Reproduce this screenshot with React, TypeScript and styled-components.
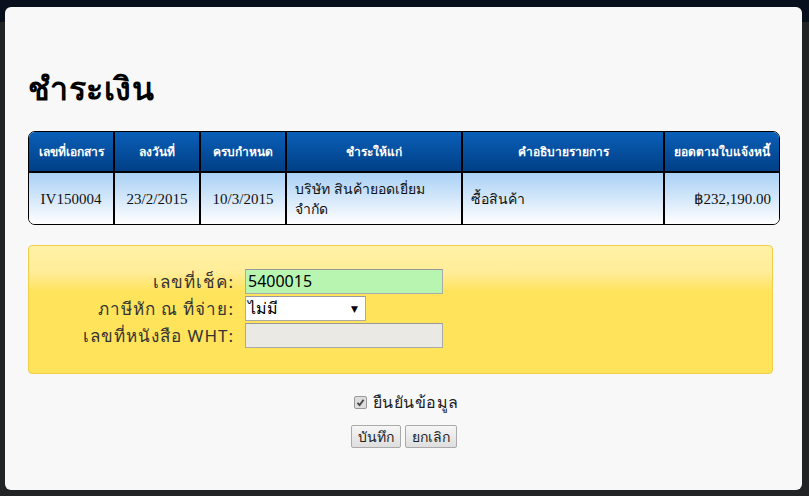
import React from "react";
import styled, { createGlobalStyle } from "styled-components";

const Global = createGlobalStyle`
  html, body { margin: 0; padding: 0; }
  body {
    width: 809px; height: 496px; overflow: hidden;
    background: #1e1f21;
    font-family: "Noto Sans", "DejaVu Sans", sans-serif;
  }
`;

const Backdrop = styled.div`
  width: 809px;
  height: 496px;
  box-sizing: border-box;
  padding: 7px 7px 6px 5px;
  background: linear-gradient(#07101c 0, #07101c 22px, #222324 22px, #222324 100%);
`;

const Modal = styled.div`
  width: 797px;
  height: 483px;
  box-sizing: border-box;
  background: #f8f8f8;
  border-radius: 6px;
  padding: 0 22px 0 23px;
  display: flex;
  flex-direction: column;
`;

const Title = styled.h1`
  margin: 58px 0 0 0;
  height: 66px;
  font-size: 32px;
  font-weight: bold;
  color: #000;
  line-height: 46px;
  letter-spacing: 0.5px;
`;

const TableWrap = styled.div`
  width: 752px;
  border: 1px solid #000;
  border-radius: 7px;
  overflow: hidden;
  box-sizing: border-box;
`;

const Table = styled.table`
  width: 750px;
  border-collapse: collapse;
  table-layout: fixed;
`;

const Th = styled.th`
  height: 39px;
  padding: 0 2px;
  background: linear-gradient(#0a5fb8, #003f86);
  color: #fff;
  font-size: 12px;
  font-weight: bold;
  text-align: center;
  white-space: nowrap;
  border-left: 2px solid #000;
  border-bottom: 2px solid #000;
  &:first-child { border-left: none; }
`;

const Td = styled.td<{ $align?: string; $thai?: boolean }>`
  height: 51px;
  padding: 0 8px;
  background: linear-gradient(#a9d0f5, #ffffff);
  color: #111;
  font-family: ${(p) => (p.$thai ? `"Noto Sans", sans-serif` : `"Liberation Serif", serif`)};
  font-size: ${(p) => (p.$thai ? "14px" : "15px")};
  line-height: 20px;
  text-align: ${(p) => p.$align || "center"};
  border-left: 2px solid #000;
  &:first-child { border-left: none; }
`;

const Panel = styled.div`
  margin-top: 20px;
  width: 745px;
  height: 129px;
  box-sizing: border-box;
  border: 1px solid #f1cf4a;
  border-radius: 4px;
  background: linear-gradient(#fff1a6 0px, #ffed99 26px, #ffe35b 46px, #ffe35b 100%);
  padding: 23px 0 0 0;
  display: grid;
  grid-template-columns: 205px auto;
  column-gap: 11px;
  row-gap: 2px;
  align-content: start;
`;

const Label = styled.label`
  text-align: right;
  font-size: 17px;
  letter-spacing: 1px;
  color: #333;
  line-height: 25px;
  height: 25px;
`;

const Field = styled.div<{ $bg: string; $w: number }>`
  width: ${(p) => p.$w}px;
  height: 25px;
  box-sizing: border-box;
  background: ${(p) => p.$bg};
  border: 1px solid #aaa;
  border-top-color: #999;
  font-size: 16px;
  color: #000;
  line-height: 23px;
  padding: 0 2px;
  display: flex;
  align-items: center;
  justify-content: space-between;
`;

const Arrow = styled.span`
  font-size: 9px;
  color: #000;
  margin-right: 5px;
`;

const Confirm = styled.div`
  margin-top: 18px;
  display: flex;
  justify-content: center;
  align-items: center;
  gap: 6px;
  font-size: 16px;
  letter-spacing: 0.5px;
  color: #222;
  height: 20px;
  padding-left: 4px;
`;

const Check = styled.span`
  width: 11px;
  height: 11px;
  border: 1px solid #999;
  border-radius: 2px;
  background: #ddd;
  display: flex;
  align-items: center;
  justify-content: center;
`;

const Buttons = styled.div`
  margin-top: 13px;
  display: flex;
  justify-content: center;
  gap: 4px;
`;

const Button = styled.button`
  height: 23px;
  padding: 0 6px;
  font-family: "Noto Sans", sans-serif;
  font-size: 14px;
  color: #222;
  background: linear-gradient(#f6f6f6, #dedede);
  border: 1px solid #aaa;
  border-radius: 2px;
  line-height: 19px;
`;

const widths = [85, 86, 86, 176, 202, 115];

export default function App() {
  return (
    <>
      <Global />
      <Backdrop>
        <Modal>
          <Title>ชำระเงิน</Title>
          <TableWrap>
            <Table>
              <colgroup>
                {widths.map((w, i) => (
                  <col key={i} style={{ width: w }} />
                ))}
              </colgroup>
              <thead>
                <tr>
                  <Th>เลขที่เอกสาร</Th>
                  <Th>ลงวันที่</Th>
                  <Th>ครบกำหนด</Th>
                  <Th>ชำระให้แก่</Th>
                  <Th>คำอธิบายรายการ</Th>
                  <Th>ยอดตามใบแจ้งหนี้</Th>
                </tr>
              </thead>
              <tbody>
                <tr>
                  <Td>IV150004</Td>
                  <Td>23/2/2015</Td>
                  <Td>10/3/2015</Td>
                  <Td $thai $align="left">บริษัท สินค้ายอดเยี่ยม จำกัด</Td>
                  <Td $thai $align="left">ซื้อสินค้า</Td>
                  <Td $align="right">฿232,190.00</Td>
                </tr>
              </tbody>
            </Table>
          </TableWrap>
          <Panel>
            <Label>เลขที่เช็ค:</Label>
            <Field $bg="#b8f5b0" $w={198}>5400015</Field>
            <Label>ภาษีหัก ณ ที่จ่าย:</Label>
            <Field $bg="#ffffff" $w={121}>
              ไม่มี<Arrow>▼</Arrow>
            </Field>
            <Label>เลขที่หนังสือ WHT:</Label>
            <Field $bg="#ebe9e3" $w={198} />
          </Panel>
          <Confirm>
            <Check>
              <svg width="9" height="9" viewBox="0 0 9 9">
                <path d="M1.5 4.8 L3.6 7 L7.6 1.8" stroke="#444" strokeWidth="1.8" fill="none" />
              </svg>
            </Check>
            ยืนยันข้อมูล
          </Confirm>
          <Buttons>
            <Button>บันทึก</Button>
            <Button>ยกเลิก</Button>
          </Buttons>
        </Modal>
      </Backdrop>
    </>
  );
}
